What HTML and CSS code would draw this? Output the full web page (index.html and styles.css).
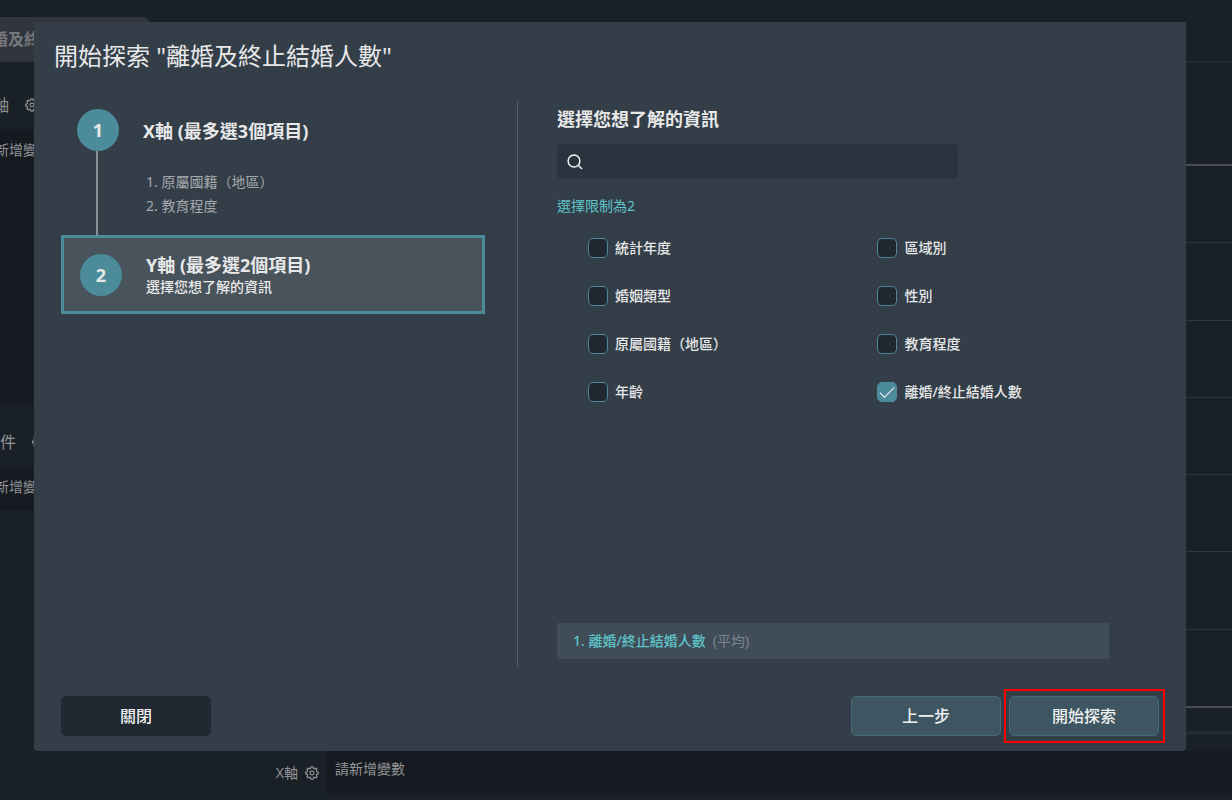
FILE: index.html
```html
<!DOCTYPE html>
<html lang="zh-Hant">
<head>
<meta charset="utf-8">
<title>開始探索</title>
<link rel="stylesheet" href="styles.css">
</head>
<body>
<svg class="sprite" aria-hidden="true">
  <symbol id="gear" viewBox="0 0 16 16">
    <path d="M6.700 1h2.600l.4 1.900 1.100.5 1.600-1.100 1.500 1.600-1 1.600.5 1.100 1.900.4v2l-1.900.4-.5 1.100 1 1.600-1.500 1.600-1.600-1-1.100.5L9.300 15H6.700l-.4-1.900-1.100-.5-1.600 1-1.500-1.600 1-1.600-.5-1.100L.7 9V7l1.900-.4.5-1.100-1-1.600 1.500-1.600 1.600 1.100 1.100-.5z" fill="none" stroke="currentColor" stroke-width="1.300" stroke-linejoin="round"/>
    <circle cx="8" cy="8" r="2.200" fill="none" stroke="currentColor" stroke-width="1.300"/>
  </symbol>
</svg>

<div class="workspace">
  <header class="tabs"><span class="tab">離婚及終止結婚人數</span></header>
  <div class="work-body">
    <aside class="side">
      <div class="side-head side-head-y"><span>Y軸</span><svg class="gear"><use href="#gear"/></svg></div>
      <div class="drop drop-y"><span>請新增變數</span></div>
      <div class="side-head side-head-filter"><span>條件</span><svg class="gear"><use href="#gear"/></svg></div>
      <div class="drop drop-filter"><span>請新增變數</span></div>
    </aside>
    <main class="chart">
      <div class="grid-lines">
        <i class="axis"></i><i></i><i></i><i></i><i></i><i></i><i></i><i class="axis"></i>
      </div>
      <div class="scroll-track"></div>
    </main>
  </div>
  <footer class="x-row">
    <div class="x-label"><span>X軸</span><svg class="gear"><use href="#gear"/></svg></div>
    <div class="x-drop">請新增變數</div>
  </footer>
</div>

<div class="overlay">
  <section class="dialog" role="dialog" aria-labelledby="dialog-title">
    <h1 class="dialog-title" id="dialog-title">開始探索 "離婚及終止結婚人數"</h1>
    <div class="dialog-body">
      <div class="steps">
        <div class="step">
          <div class="step-rail"><span class="badge">1</span><span class="rail-line"></span></div>
          <div class="step-text">
            <h2 class="step-title">X軸 (最多選3個項目)</h2>
            <div class="step-list"><div>1. 原屬國籍（地區）</div><div>2. 教育程度</div></div>
          </div>
        </div>
        <div class="step step-active">
          <span class="badge">2</span>
          <div>
            <h2 class="step-title">Y軸 (最多選2個項目)</h2>
            <p class="step-note">選擇您想了解的資訊</p>
          </div>
        </div>
      </div>
      <div class="picker">
        <h2 class="picker-title">選擇您想了解的資訊</h2>
        <div class="search">
          <svg class="search-icon" viewBox="0 0 16 16" aria-hidden="true"><circle cx="7" cy="7" r="5.900"/><path d="M11.200 11.200 15 15"/></svg>
          <input class="search-input" type="search" aria-label="搜尋">
        </div>
        <p class="limit">選擇限制為2</p>
        <div class="options">
          <label class="option"><input type="checkbox"><span>統計年度</span></label>
          <label class="option"><input type="checkbox"><span>區域別</span></label>
          <label class="option"><input type="checkbox"><span>婚姻類型</span></label>
          <label class="option"><input type="checkbox"><span>性別</span></label>
          <label class="option"><input type="checkbox"><span>原屬國籍（地區）</span></label>
          <label class="option"><input type="checkbox"><span>教育程度</span></label>
          <label class="option"><input type="checkbox"><span>年齡</span></label>
          <label class="option"><input type="checkbox" checked><span>離婚/終止結婚人數</span></label>
        </div>
        <div class="selected"><span>1. 離婚/終止結婚人數</span><span class="selected-agg">(平均)</span></div>
      </div>
    </div>
    <div class="actions">
      <button class="btn btn-dark" type="button">關閉</button>
      <div class="actions-end">
        <button class="btn" type="button">上一步</button>
        <div class="highlight"><button class="btn" type="button">開始探索</button></div>
      </div>
    </div>
  </section>
</div>
</body>
</html>
```
FILE: styles.css
```css
* { box-sizing: border-box; }
html, body { height: 100%; }
body {
  margin: 0;
  overflow: hidden;
  background: #1a2027;
  color: #e8e8e8;
  font: 14px/20px "Noto Sans", "Noto Sans CJK TC", sans-serif;
}
h1, h2, p { margin: 0; }
.sprite { position: absolute; width: 0; height: 0; }

/* Workspace behind the dialog */
.workspace {
  display: flex;
  flex-direction: column;
  height: 100%;
  overflow: hidden;
  color: #929394;
}
.tabs {
  display: flex;
  padding-top: 17px;
  height: 62px;
  border-bottom: 1px solid #272f38;
}
.tab {
  display: flex;
  align-items: center;
  justify-content: flex-end;
  width: 150px;
  padding-right: 30px;
  border-radius: 0 8px 0 0;
  background: #31363d;
  color: #74777b;
  font-size: 16px;
  font-weight: 700;
  white-space: nowrap;
}
.work-body { display: flex; flex: 1; }
.side { display: flex; flex-direction: column; width: 150px; }
.side-head {
  display: flex;
  align-items: center;
  gap: 16px;
  font-size: 16px;
}
.side-head > span { display: flex; justify-content: flex-end; white-space: nowrap; }
.side-head-y { height: 69px; padding-top: 16px; }
.side-head-y > span { width: 9px; }
.side-head-filter { height: 64px; padding-top: 12px; }
.side-head-filter > span { width: 16px; }
.gear { width: 14px; height: 14px; flex: none; }
.drop { background: #151920; padding-top: 9px; }
.drop > span { display: flex; justify-content: flex-end; width: 51px; white-space: nowrap; }
.drop-y { height: 273px; }
.drop-filter { height: 42px; }
.chart { display: flex; flex: 1; flex-direction: column; padding-top: 102px; }
.grid-lines {
  display: flex;
  flex-direction: column;
  justify-content: space-between;
  height: 544px;
}
.grid-lines i { height: 1px; background: #30363e; }
.grid-lines .axis { height: 2px; background: #484b50; }
.scroll-track { height: 4px; margin-top: 23px; background: #252b33; }
.x-row { display: flex; height: 49px; }
.x-label {
  display: flex;
  align-items: center;
  justify-content: flex-end;
  gap: 7px;
  width: 327px;
  padding: 0 8px 5px 0;
}
.x-drop { flex: 1; height: 42px; padding: 8px; background: #151920; }

/* Dialog */
.overlay {
  position: absolute;
  inset: 0;
  display: flex;
  padding: 22px 46px 49px 34px;
}
.dialog {
  display: flex;
  flex: 1;
  flex-direction: column;
  padding: 16px 21px 8px 20px;
  border-radius: 0 0 4px 4px;
  background: #333e49;
}
.dialog-title { font-size: 24px; font-weight: 400; line-height: 36px; }
.dialog-body {
  display: grid;
  grid-template-columns: 464px 1fr;
  flex: 1;
  margin-top: 28px;
}
.steps { padding: 7px 32px 0 7px; border-right: 1px solid #56606a; }
.step { display: flex; gap: 24px; }
.step:first-child { padding-left: 16px; min-height: 126px; }
.step-rail { display: flex; flex-direction: column; align-items: center; }
.badge {
  display: flex;
  align-items: center;
  justify-content: center;
  flex: none;
  width: 42px;
  height: 42px;
  border-radius: 50%;
  background: #4c8c9a;
  font-size: 18px;
  font-weight: 700;
}
.rail-line { flex: 1; width: 2px; margin-right: 2px; background: #8b9096; }
.step-title { font-size: 18px; line-height: 24px; font-weight: 700; }
.step:first-child .step-title { padding-top: 10px; }
.step-list { padding: 27px 0 0 3px; line-height: 24px; color: #a4a8ac; }
.step-active {
  align-items: center;
  height: 79px;
  padding: 0 16px;
  border: 3px solid #4c8c9a;
  background: #48535c;
}
.step-note { font-weight: 500; line-height: 20px; }
.picker { display: flex; flex-direction: column; padding: 5px 56px 7px 39px; }
.picker-title { font-size: 18px; line-height: 24px; font-weight: 700; }
.search {
  display: flex;
  align-items: center;
  width: 401px;
  height: 35px;
  margin-top: 13px;
  padding: 0 10px;
  gap: 8px;
  border-radius: 5px;
  background: #2a343e;
}
.search-icon { width: 16px; height: 16px; fill: none; stroke: #f0f0f0; stroke-width: 1.5; }
.search-input {
  flex: 1;
  min-width: 0;
  border: 0;
  outline: 0;
  background: transparent;
  color: inherit;
  font: inherit;
}
.limit { margin-top: 17px; color: #5fc4ca; }
.options {
  display: grid;
  grid-template-columns: 5fr 4fr;
  gap: 28px 0;
  margin-top: 22px;
  padding-left: 31px;
}
.option { display: flex; align-items: center; gap: 7px; font-weight: 500; }
.option input {
  appearance: none;
  display: grid;
  place-items: center;
  width: 20px;
  height: 20px;
  margin: 0;
  border: 1px solid #4c8c9a;
  border-radius: 5px;
  background: #202932;
}
.option input:checked { background: #4c8c9a; }
.option input:checked::before {
  content: "";
  width: 13px;
  height: 6px;
  border: solid #f4f4f4;
  border-width: 0 0 1px 1px;
  transform: translateY(-2px) rotate(-45deg);
}
.selected {
  display: flex;
  align-items: center;
  gap: 7px;
  height: 36px;
  margin-top: auto;
  padding-left: 16px;
  background: #404c58;
  color: #5fc4ca;
  font-weight: 500;
}
.selected-agg { color: #7d868f; font-weight: 400; }
.actions {
  display: flex;
  align-items: center;
  justify-content: space-between;
  margin-top: 23px;
  padding-left: 7px;
}
.actions-end { display: flex; align-items: center; gap: 3px; }
.btn {
  width: 150px;
  height: 40px;
  border: 1px solid #426c77;
  border-radius: 5px;
  background: #3d5661;
  color: #f0f0f0;
  font: 500 16px/24px "Noto Sans", "Noto Sans CJK TC", sans-serif;
}
.btn-dark { border-color: #202932; background: #202932; }
.highlight { display: flex; padding: 5px 4px 5px 3px; border: 2px solid #ff0000; }
```
